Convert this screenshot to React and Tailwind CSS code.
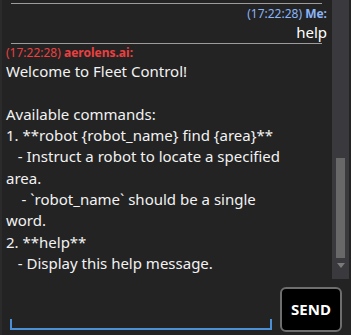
import React from "react";

const body =
  "Welcome to Fleet Control!\n\nAvailable commands:\n1. **robot {robot_name} find {area}**\n   - Instruct a robot to locate a specified area.\n    - `robot_name` should be a single word.\n2. **help**\n   - Display this help message.";

export default function App() {
  return (
    <div
      className="w-[351px] h-[335px] bg-[#232323] flex flex-col border-l-2 border-[#2b2b2b] overflow-hidden"
      style={{ fontFamily: '"Noto Sans", "Open Sans", sans-serif' }}
    >
      <div className="h-[279px] flex shrink-0">
        <div className="w-[330px] overflow-hidden pl-[4px] pr-[5px]">
          <div className="pt-[3px]">
            <div className="mx-[5px] h-px bg-[#9c9c9c]" />
          </div>
          <div className="pt-[2px]">
            <div className="text-right text-[12px] leading-[16px] text-[#8ab4f8]">
              (17:22:28) <span className="font-bold">Me:</span>
            </div>
            <div className="text-right text-[15px] leading-[21px] text-white">help</div>
            <div className="mx-[5px] h-px bg-[#9c9c9c]" />
          </div>
          <div className="pt-[1px]">
            <div className="text-[12px] leading-[16px] text-[#ec4040]">
              (17:22:28) <span className="font-bold">aerolens.ai:</span>
            </div>
            <div className="max-w-[290px] whitespace-pre-wrap text-[15px] leading-[21.33px] text-[#f2f2f2]">
              {body}
            </div>
          </div>
        </div>
        <div className="w-[17px] bg-[#3a3a3e] flex flex-col items-center pt-[158px]">
          <div className="w-[9px] h-[100px] bg-[#686868]" />
          <div className="mt-[5px] w-0 h-0 border-l-[4px] border-r-[4px] border-t-[5px] border-l-transparent border-r-transparent border-t-[#7a7a7a]" />
        </div>
      </div>
      <div className="flex-1 flex items-end pl-[8px] pb-[3px]">
        <div className="w-[262px] h-[11px] mb-[2px] border-l-2 border-r-2 border-b-2 border-[#4a90d9]" />
        <button className="ml-[8px] w-[62px] h-[45px] rounded-[6px] border-2 border-[#6e6e6e] bg-black text-white font-bold text-[15px] flex items-center justify-center">
          SEND
        </button>
      </div>
    </div>
  );
}
